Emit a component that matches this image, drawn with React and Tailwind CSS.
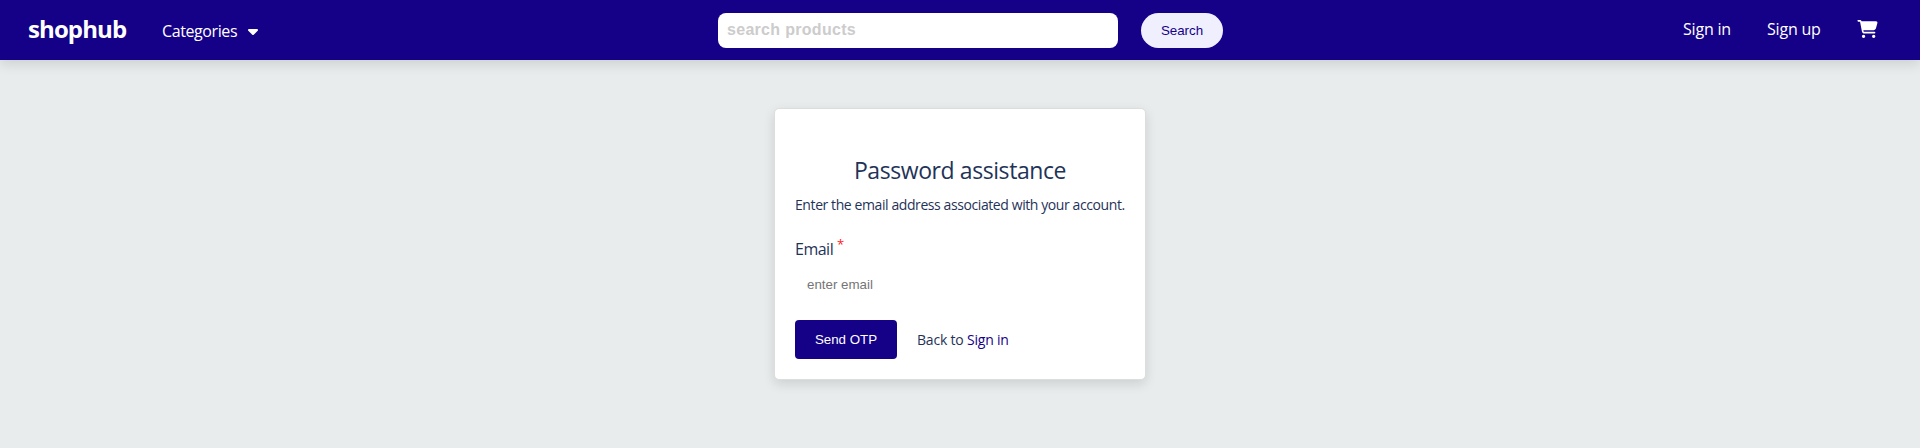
import React from 'react';
import { FaCaretDown, FaCartShopping } from 'react-icons/fa6';

function Header() {
  return (
    <header className="relative flex h-[60px] items-start bg-[#150088] text-white shadow-[0_4px_12px_rgba(0,0,0,0.12)]">
      <div className="flex w-[718px] items-start pl-[28px]">
        <a href="#" className="mt-[11px] w-[134px] whitespace-nowrap text-[24px] leading-[36px] font-bold tracking-[-0.9px]">shophub</a>
        <button className="mt-[19px] flex items-center whitespace-nowrap text-[16px] leading-[24px]">
          <span className="w-[83px] text-left tracking-[-0.4px]">Categories</span>
          <FaCaretDown className="h-4 w-4 shrink-0" />
        </button>
      </div>
      <form className="mt-[13px] flex gap-[23px]">
        <input
          placeholder="search products"
          className="h-[35px] w-[400px] rounded-lg bg-white px-[9px] pb-[2px] font-['Liberation_Sans',sans-serif] text-[16px] font-bold tracking-[0.3px] placeholder:text-[#cccccc]"
        />
        <button type="button" className="h-[35px] w-[82px] rounded-full bg-[#efeffd] font-['Liberation_Sans',sans-serif] text-[13.333px] text-[#150088]">Search</button>
      </form>
      <nav className="ml-auto flex items-start whitespace-nowrap pr-[42px] text-[16px] leading-[24px]">
        <a href="#" className="mt-[17px] w-[84px] tracking-[-0.2px]">Sign in</a>
        <a href="#" className="mt-[17px] w-[90px] tracking-[-0.2px]">Sign up</a>
        <FaCartShopping className="mt-[20px] h-[18px] w-[21px]" />
      </nav>
    </header>
  );
}

export default function App() {
  return (
    <div className="min-h-[448px] bg-[#e8ecec] font-['Open_Sans','Noto_Sans',sans-serif] text-[#1f3358]">
      <Header />
      <main className="flex justify-center pt-[48px]">
        <section className="h-[272px] w-[372px] rounded-[5px] border border-[#dcdddd] bg-white px-[20px] pt-[43px] shadow-[0_4px_12px_rgba(0,0,0,0.12)]">
          <h1 className="whitespace-nowrap text-center text-[23px] leading-[36px] tracking-[-0.42px]">Password assistance</h1>
          <p className="mt-[7px] whitespace-nowrap text-[14px] leading-[20px] tracking-[-0.41px]">Enter the email address associated with your account.</p>
          <label className="mt-[22px] flex items-start text-[16px] leading-[24px]">
            <span className="w-[42px] tracking-[-0.5px]">Email</span>
            <span className="-mt-[3px] text-[13px] leading-[20px] text-[#ff1a1a]">*</span>
          </label>
          <input
            placeholder="enter email"
            className="mt-[6px] block h-[35px] w-full px-[12px] font-['Liberation_Sans',sans-serif] text-[13.333px] placeholder:text-[#757575]"
          />
          <div className="mt-[18px] flex items-start">
            <button className="h-[39px] w-[102px] rounded-[4px] bg-[#150088] font-['Liberation_Sans',sans-serif] text-[13.333px] font-medium text-white">Send OTP</button>
            <p className="ml-[20px] mt-[10px] whitespace-nowrap text-[14px] leading-[20px] tracking-[-0.2px]">
              Back to <a href="#" className="text-[#150088]">Sign in</a>
            </p>
          </div>
        </section>
      </main>
    </div>
  );
}
